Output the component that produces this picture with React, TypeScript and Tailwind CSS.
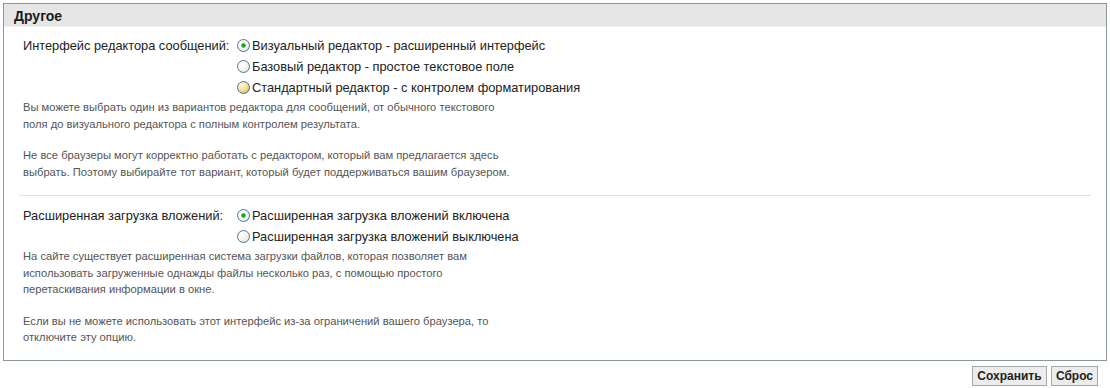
import React from "react";

function Radio({ state }: { state: "checked" | "empty" | "hover" }) {
  const fillId = `g-${state}`;
  return (
    <svg width="13" height="13" viewBox="0 0 13 13" className="shrink-0">
      <defs>
        <radialGradient id={fillId} cx="0.35" cy="0.3" r="0.8">
          {state === "hover" ? (
            <>
              <stop offset="0" stopColor="#fff9e0" />
              <stop offset="0.6" stopColor="#f2dc8e" />
              <stop offset="1" stopColor="#d9ad3a" />
            </>
          ) : (
            <>
              <stop offset="0" stopColor="#ffffff" />
              <stop offset="0.7" stopColor="#f0f0ea" />
              <stop offset="1" stopColor="#d6d6ce" />
            </>
          )}
        </radialGradient>
      </defs>
      <circle cx="6.5" cy="6.5" r="6" fill={`url(#${fillId})`} stroke="#1c5180" strokeOpacity="0.75" strokeWidth="1" />
      {state === "checked" && <circle cx="6.5" cy="6.5" r="2.2" fill="#21a121" />}
    </svg>
  );
}

function Option({ state, children }: { state: "checked" | "empty" | "hover"; children: React.ReactNode }) {
  return (
    <div className="flex items-center gap-[2px] h-[21px]">
      <Radio state={state} />
      <span>{children}</span>
    </div>
  );
}

export default function App() {
  return (
    <div
      className="w-[1110px] h-[388px] bg-white text-[#222] relative"
      style={{ fontFamily: "Tahoma, 'Liberation Sans', Arial, sans-serif" }}
    >
      <div className="pt-[3px] pl-[3px] pr-[3px]">
        <div className="border border-[#8a979c] w-[1104px]">
          <div className="h-[23px] bg-[#e6e6e6] border-b border-[#f2f2f2] flex items-center pl-[10px] pt-[2px] text-[14px] font-bold text-[#1b1b1b]">
            Другое
          </div>
          <div className="pt-[8px] px-[15px] pb-[14px]">
            <div className="pl-[4px]">
              <div className="flex text-[12.8px] leading-[21px]">
                <div className="w-[214px] shrink-0 h-[21px] flex items-center">Интерфейс редактора сообщений:</div>
                <div className="flex flex-col">
                  <Option state="checked">Визуальный редактор - расширенный интерфейс</Option>
                  <Option state="empty">Базовый редактор - простое текстовое поле</Option>
                  <Option state="hover">Стандартный редактор - с контролем форматирования</Option>
                </div>
              </div>
              <div className="text-[11.2px] leading-[16.5px] text-[#555] mt-[1px]">
                <p>
                  Вы можете выбрать один из вариантов редактора для сообщений, от обычного текстового
                  <br />
                  поля до визуального редактора с полным контролем результата.
                </p>
                <p className="mt-[15px]">
                  Не все браузеры могут корректно работать с редактором, который вам предлагается здесь
                  <br />
                  выбрать. Поэтому выбирайте тот вариант, который будет поддерживаться вашим браузером.
                </p>
              </div>
            </div>
            <div className="h-px bg-[#dde0e2] mt-[15px] mb-[9px]" />
            <div className="pl-[4px]">
              <div className="flex text-[12.8px] leading-[21px]">
                <div className="w-[214px] shrink-0 h-[21px] flex items-center">Расширенная загрузка вложений:</div>
                <div className="flex flex-col">
                  <Option state="checked">Расширенная загрузка вложений включена</Option>
                  <Option state="empty">Расширенная загрузка вложений выключена</Option>
                </div>
              </div>
              <div className="text-[11.2px] leading-[16.5px] text-[#555] mt-[1px]">
                <p>
                  На сайте существует расширенная система загрузки файлов, которая позволяет вам
                  <br />
                  использовать загруженные однажды файлы несколько раз, с помощью простого
                  <br />
                  перетаскивания информации в окне.
                </p>
                <p className="mt-[15px]">
                  Если вы не можете использовать этот интерфейс из-за ограничений вашего браузера, то
                  <br />
                  отключите эту опцию.
                </p>
              </div>
            </div>
          </div>
        </div>
        <div className="flex justify-end gap-[4px] mt-[5px] pr-[9px]">
          <button className="h-[20px] w-[75px] bg-[#ececec] border border-[#a8a8a8] text-[12px] font-bold text-[#222] leading-none">
            Сохранить
          </button>
          <button className="h-[20px] w-[47px] bg-[#ececec] border border-[#a8a8a8] text-[12px] font-bold text-[#222] leading-none">
            Сброс
          </button>
        </div>
      </div>
    </div>
  );
}
